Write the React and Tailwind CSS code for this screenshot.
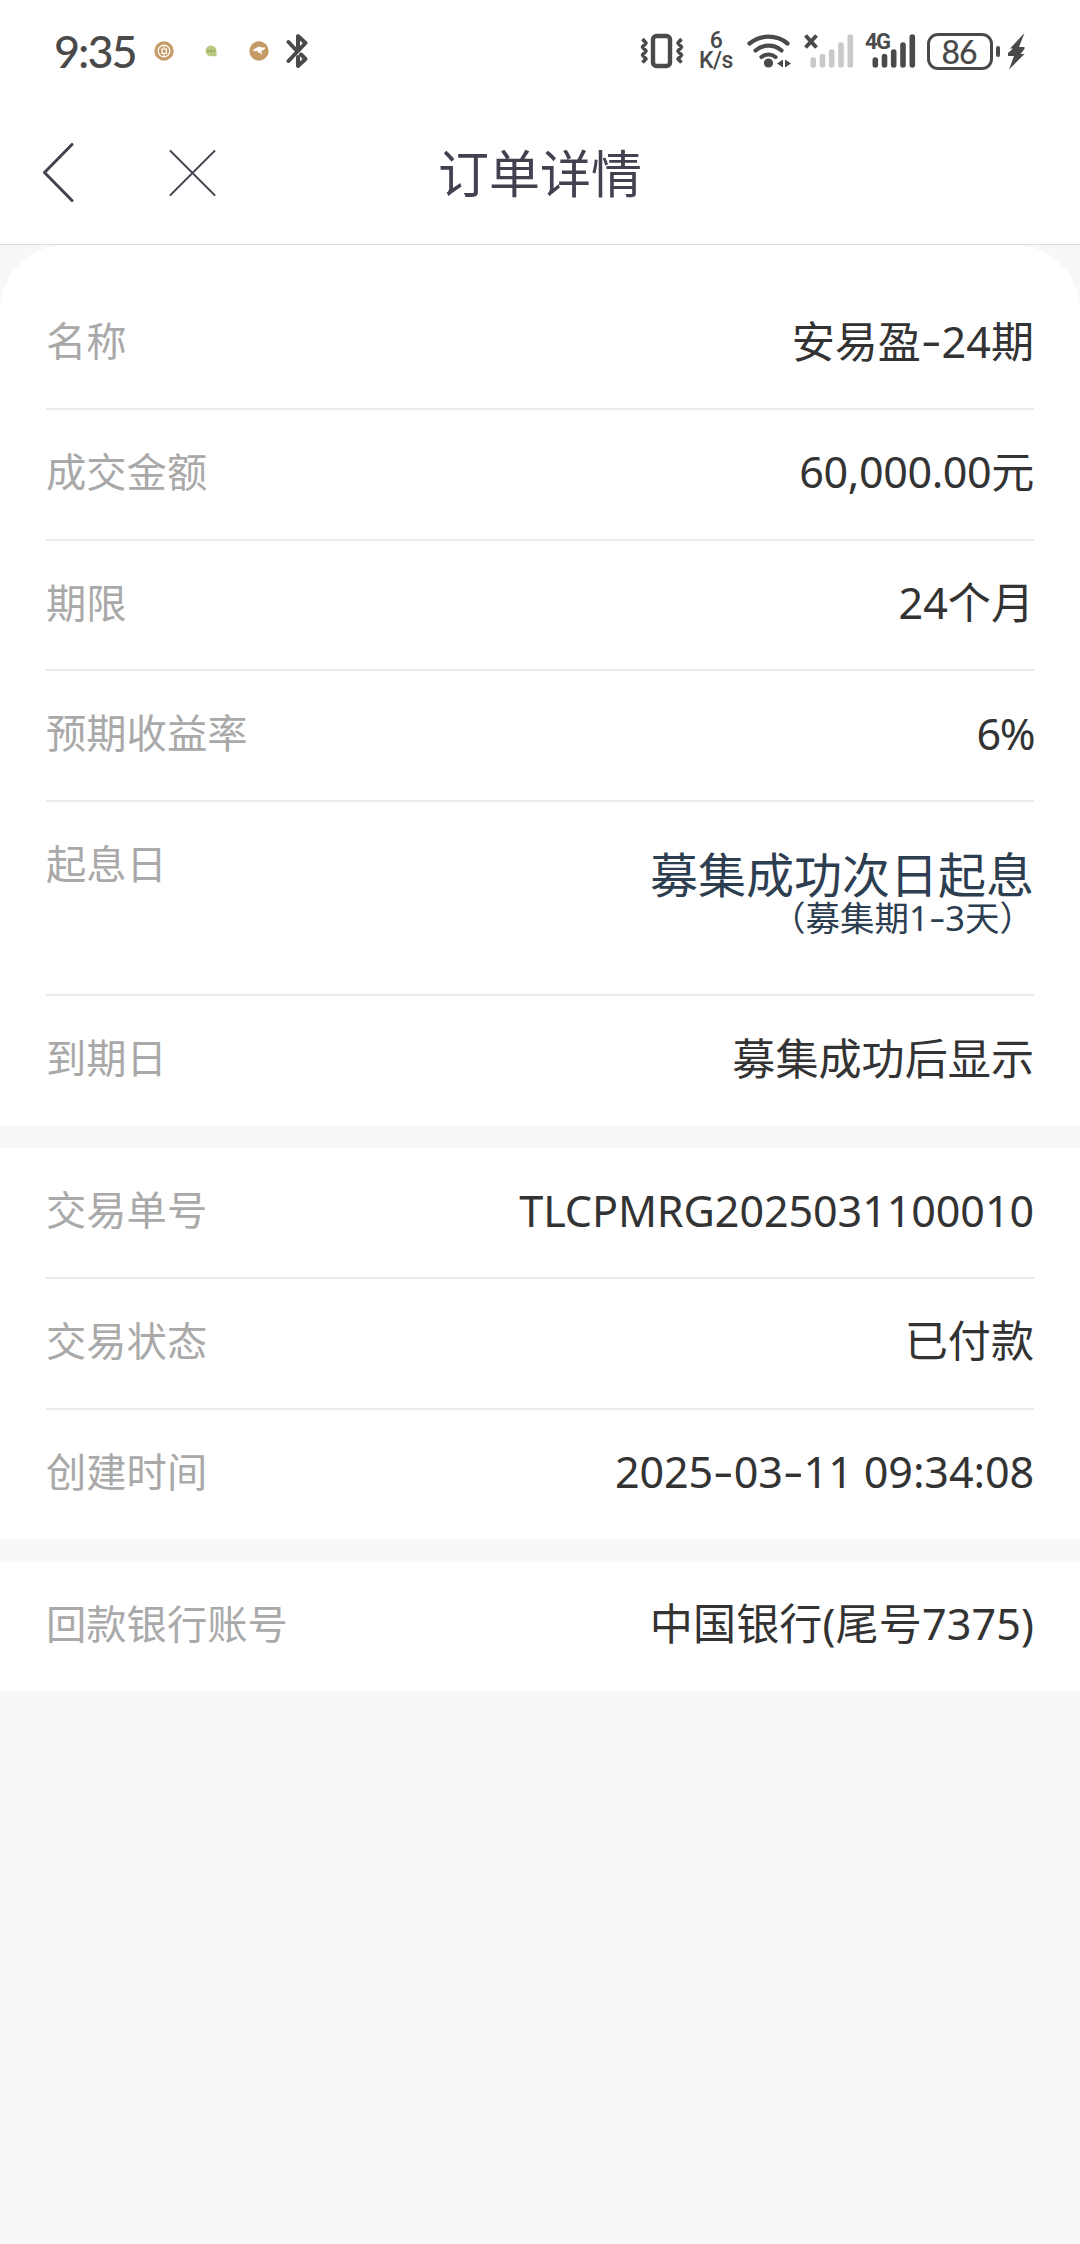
import React from "react";

const productRows = [
  { label: "名称", value: "安易盈-24期" },
  { label: "成交金额", value: "60,000.00元", spacing: "tracking-[-0.4px]" },
  { label: "期限", value: "24个月" },
  { label: "预期收益率", value: "6%", spacing: "tracking-[-1.5px]" },
  { label: "起息日", value: "募集成功次日起息", note: "（募集期1-3天）" },
  { label: "到期日", value: "募集成功后显示" },
];

const tradeRows = [
  { label: "交易单号", value: "TLCPMRG2025031100010", spacing: "tracking-[-0.1px]" },
  { label: "交易状态", value: "已付款" },
  { label: "创建时间", value: "2025-03-11 09:34:08", spacing: "tracking-[-0.1px]" },
];

const bankRows = [
  { label: "回款银行账号", value: "中国银行(尾号7375)", spacing: "tracking-[0.1px]" },
];

const SignalBars = ({ className }) => (
  <svg width="44" height="36" viewBox="0 0 44 36" fill="none" strokeWidth="5.6" strokeLinecap="round" className={className}>
    <path d="M3.3 27v5M12.5 23.5v8.5M21.7 19v13M31 12v20M40.3 4v28" />
  </svg>
);

const StatusBar = () => (
  <div className="flex h-[102px] items-center justify-between pl-[54px] pr-[55px] font-['Lato','Noto_Sans',sans-serif] text-[#4a4a4a]">
    <div className="flex items-center">
      <span className="w-[100px] shrink-0 text-[45px] leading-[60px] font-medium tracking-[-2px]">9:35</span>
      <svg width="20" height="20" viewBox="0 0 20 20" fill="none" className="mr-[31px]">
        <circle cx="10" cy="10" r="9.7" fill="#c49b66" />
        <circle cx="10" cy="10" r="5.8" stroke="#fff" strokeWidth="1.3" />
        <rect x="8" y="8" width="4.4" height="4.4" stroke="#fff" strokeWidth="1.2" />
        <path d="M10 4v3M10 13v3" stroke="#fff" />
      </svg>
      <svg width="12" height="12" viewBox="0 0 12 12" className="mr-[32px]">
        <path d="M6 .5a5.5 5.5 0 0 1 5.5 5.5v5.3H6A5.4 5.4 0 0 1 6 .5Z" fill="#b9ca7e" />
        <path d="M2.4 6h1.6M5.3 6h1.6M8.2 6h1.6" stroke="#64733a" strokeWidth="1.2" />
      </svg>
      <svg width="20" height="20" viewBox="0 0 20 20" className="mr-[17px]">
        <circle cx="10" cy="10" r="9.7" fill="#c49b66" />
        <path d="M3.5 9.6 6.8 7l3-1.6 3.2 1 3.6.2-1.5 2.1-2.7 1 .6 4.6-1.6-2.4-2.5-.3-.4-1.9-2.2.5Z" fill="#fff" />
      </svg>
      <svg width="22" height="36" viewBox="0 0 22 36" fill="none" stroke="currentColor" strokeWidth="4" strokeLinecap="round" strokeLinejoin="round">
        <path d="M2.5 9 10.5 17.5M2.5 28 19.5 10 12 3v14M12 24v9l7.5-7-4.5-4.5" />
      </svg>
    </div>

    <div className="flex items-center">
      <svg width="44" height="36" viewBox="0 0 44 36" fill="none" stroke="currentColor" strokeLinejoin="round">
        <rect x="13" y="3" width="17" height="30" rx="3.5" strokeWidth="4.4" />
        <path d="m2.5 6 3.5 4-3.5 4L6 18l-3.5 4L6 26l-3.5 3.5M41.5 6 38 10l3.5 4-3.5 4 3.5 4-3.5 4 3.5 3.5" strokeWidth="3.6" />
      </svg>
      <div className="ml-[14px] flex w-[36px] flex-col items-center font-['Roboto',sans-serif] text-[23px] leading-[20px] font-medium tracking-[-0.5px]">
        <span>6</span>
        <span>K/s</span>
      </div>
      <svg width="46" height="36" viewBox="0 0 46 36" fill="none" stroke="currentColor" strokeWidth="4.2" strokeLinecap="round" className="ml-[12px]">
        <path d="M3.5 10.5a30 30 0 0 1 38 0M9.5 17.5a20 20 0 0 1 26 0M15.5 24a11 11 0 0 1 14 0" />
        <circle cx="22.5" cy="30" r="4.6" fill="currentColor" stroke="none" />
        <path d="m37 26.5v8l-6-4ZM39 26.5v8l6-4Z" fill="currentColor" stroke="none" />
      </svg>
      <div className="relative ml-[18px]">
        <SignalBars className="stroke-[#c9c9c9]" />
        <svg width="14" height="15" viewBox="0 0 14 15" stroke="currentColor" strokeWidth="4" className="absolute -left-[6px] top-[1px]">
          <path d="m1.5 1.5 11 12M12.5 1.5l-11 12" />
        </svg>
      </div>
      <div className="relative ml-[18px]">
        <SignalBars className="stroke-[#4a4a4a]" />
        <span className="absolute -left-[7px] -top-[2px] font-['Roboto',sans-serif] text-[22px] leading-[22px] font-bold tracking-[-1.5px]">4G</span>
      </div>
      <div className="ml-[11px] flex h-[37px] w-[66px] items-center justify-center rounded-[11px] border-[3px] border-[#4a4a4a] pr-[2px] text-[32px] leading-[31px] font-medium tracking-[-1px]">
        86
      </div>
      <div className="ml-[3px] h-[11px] w-[4px] rounded-sm bg-[#4a4a4a]" />
      <svg width="18" height="37" viewBox="0 0 18 37" fill="currentColor" className="ml-[7px]">
        <path d="M17.5 0 3 15.5h3L1 20v3h6L2 36.5 17.5 21h-4l4-5v-2H12Z" />
      </svg>
    </div>
  </div>
);

const NavBar = () => (
  <div className="grid h-[143px] grid-cols-3 items-center border-b border-[#dcdcdc] text-[#41414f]">
    <div className="flex items-center gap-[95px] pl-[42px]">
      <svg width="32" height="60" viewBox="0 0 32 60" fill="none" stroke="currentColor" strokeWidth="3" strokeLinecap="round" strokeLinejoin="round">
        <path d="M30 1.5 2.5 29.5 30 57.5" />
      </svg>
      <svg width="47" height="47" viewBox="0 0 47 47" stroke="currentColor" strokeWidth="1.8" strokeLinecap="round">
        <path d="m1.5 1 44 44M45.500 1l-44 44" />
      </svg>
    </div>
    <h1 className="text-center text-[51px] leading-none">订单详情</h1>
  </div>
);

// hyphens are drawn wider and a little higher than the font's own
const Dashed = ({ text }) =>
  text.split(/(-)/).map((part, i) =>
    part === "-" ? (
      <span key={i} className="relative -top-[0.03em] inline-block w-[0.48em] scale-x-[1.45] text-center">
        -
      </span>
    ) : (
      part
    )
  );

const DetailRow = ({ label, value, note, spacing = "" }) => (
  <div
    className={`flex justify-between border-b-2 border-[#ebebeb] last:border-b-0 ${
      note ? "h-[194px]" : "h-[130.75px] last:h-[129px]"
    }`}
  >
    <span className="pt-[32px] text-[40.3px] leading-[60px] text-[#a9a9a9]">{label}</span>
    {note ? (
      <div className="flex flex-col items-end text-[#2c3e50]">
        <span className="mt-[49px] text-[48px] leading-[48px]">{value}</span>
        <span className="mt-[1px] text-[34.5px] leading-[35px]">
          <Dashed text={note} />
        </span>
      </div>
    ) : (
      <span className={`pt-[32.5px] text-[43.1px] leading-[60px] text-[#333333] ${spacing}`}>
        <Dashed text={value} />
      </span>
    )}
  </div>
);

const DetailCard = ({ rows, className = "" }) => (
  <section className={`bg-white px-[46px] ${className}`}>
    {rows.map((row) => (
      <DetailRow key={row.label} {...row} />
    ))}
  </section>
);

const App = () => {
  return (
    <div className="min-h-[2244px] w-[1080px] bg-[#f8f8f8] font-['Noto_Sans','Noto_Sans_CJK_SC',sans-serif]">
      <header className="bg-white">
        <StatusBar />
        <NavBar />
      </header>
      <main className="flex flex-col gap-[23px]">
        <DetailCard rows={productRows} className="rounded-t-[66px] pt-[34px]" />
        <DetailCard rows={tradeRows} />
        <DetailCard rows={bankRows} />
      </main>
    </div>
  );
};

export default App;
